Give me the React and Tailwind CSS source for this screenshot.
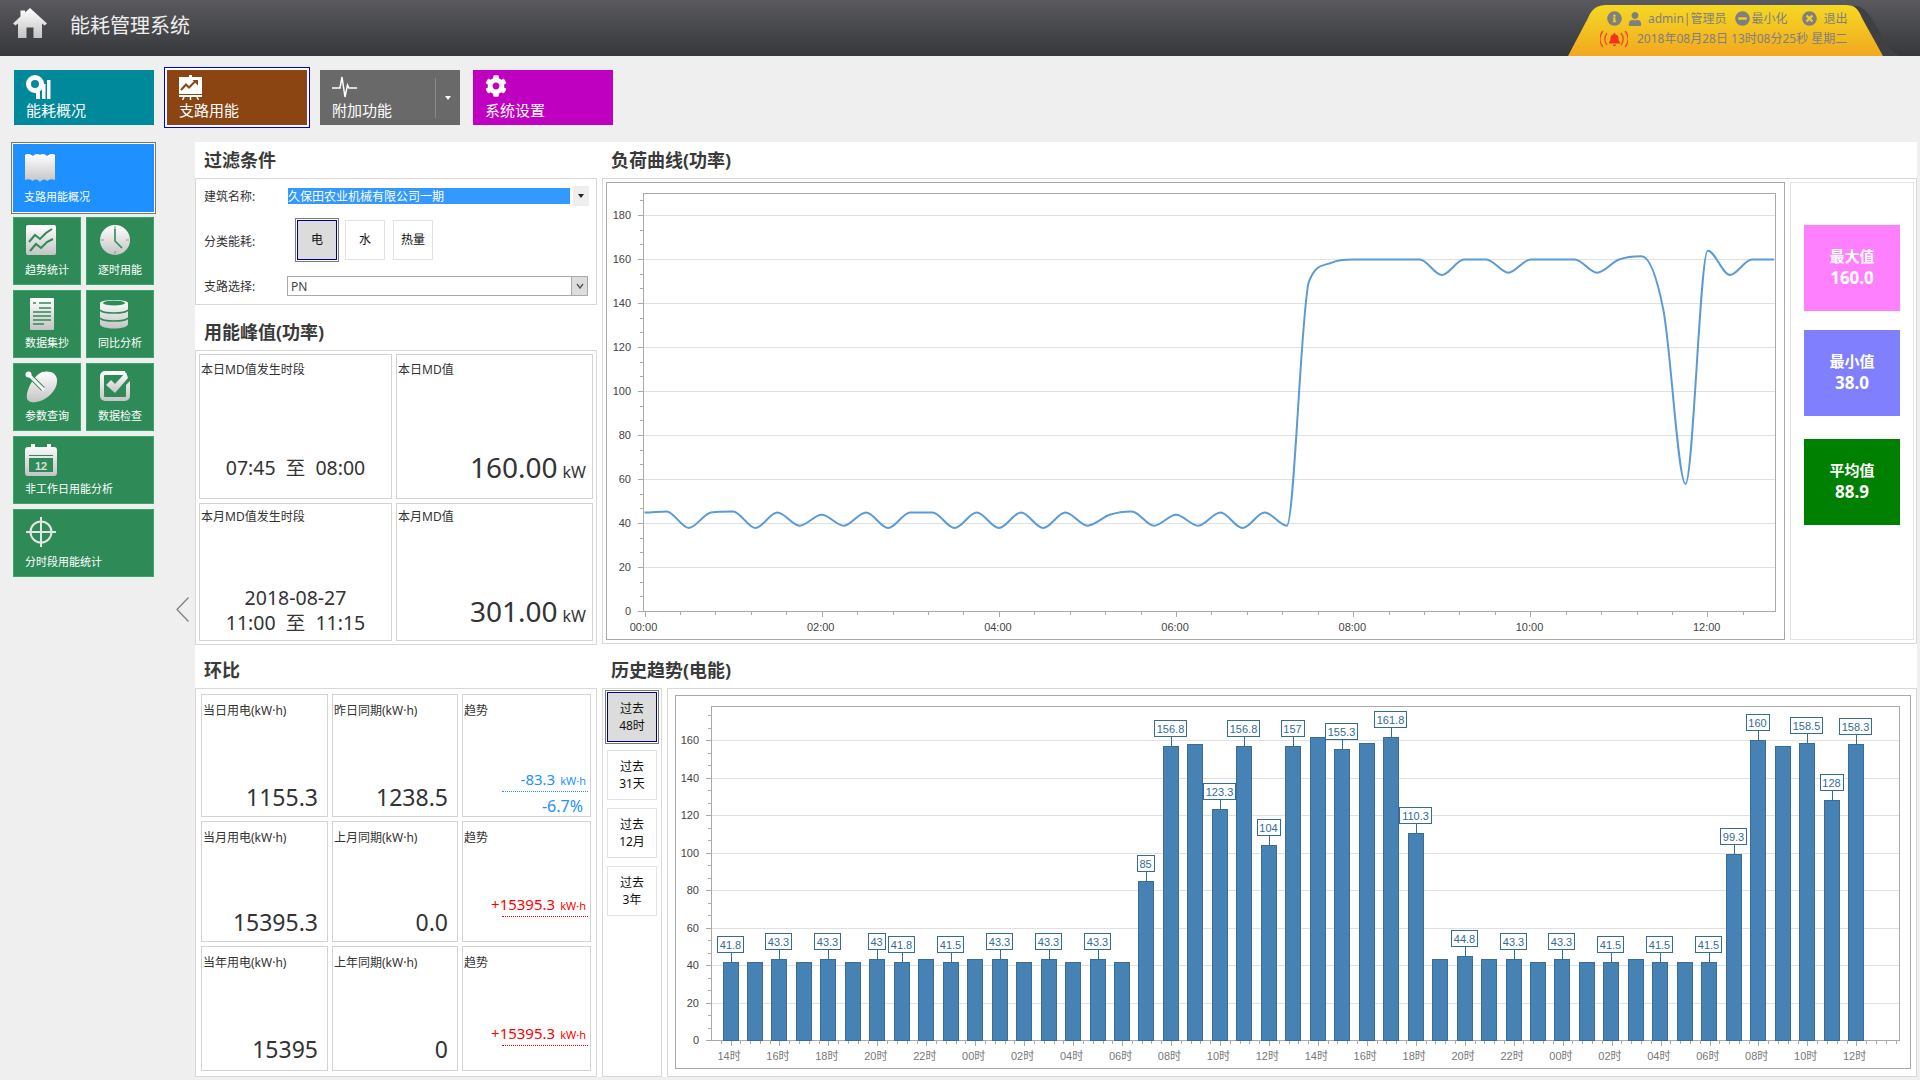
import {FaBell, FaCog, FaInfoCircle, FaMinusCircle, FaTimesCircle, FaUser} from "react-icons/fa";

const loadCurve = [
  45, 45.5, 38, 45, 45.5, 38, 45, 39, 44, 39, 45, 38, 45, 45, 38, 45, 38, 45, 38, 45, 39, 44, 45.5, 39, 44, 39,
  45, 38, 45, 39, 150, 158.5, 160, 160, 160, 160, 153, 160, 160, 154, 160, 160, 160, 154, 160, 161.5, 137, 58,
  164, 153, 160, 160,
];

const bars = [
  [41.8, 1], [41.8], [43.3, 1], [41.8], [43.3, 1], [41.8], [43.3, "43"], [41.8, 1], [43.3], [41.5, 1], [43.3],
  [43.3, 1], [41.5], [43.3, 1], [41.5], [43.3, 1], [41.5], [85, 1], [156.8, 1], [158.3], [123.3, 1], [156.8, 1],
  [104, 1], [157, 1], [162], [155.3, 1], [158.5], [161.8, 1], [110.3, 1], [43.3], [44.8, 1], [43.3], [43.3, 1],
  [41.5], [43.3, 1], [41.5], [41.5, 1], [43.3], [41.5, 1], [41.5], [41.5, 1], [99.3, 1], [160, 1], [157],
  [158.5, 1], [128, 1], [158.3, 1],
];

const hourNames = ["14", "16", "18", "20", "22", "00", "02", "04", "06", "08", "10", "12", "14", "16", "18", "20", "22", "00", "02", "04", "06", "08", "10", "12"];

// smooth path through the quarter hour points, flat at the peaks so the big step doesn't overshoot
function curvePath(data) {
  const stepX = 22.15;
  const pts = data.map((v, i) => [644.5 + i * stepX, 611.5 - v * 2.2]);
  const slopes = pts.map((p, i) => {
    if (i === 0 || i === pts.length - 1) return 0;
    const d0 = p[1] - pts[i - 1][1];
    const d1 = pts[i + 1][1] - p[1];
    if (d0 * d1 <= 0) return 0;
    const m = (d0 + d1) / 2;
    const limit = 3 * Math.min(Math.abs(d0), Math.abs(d1));
    return Math.sign(m) * Math.min(Math.abs(m), limit);
  });
  let d = `M${pts[0][0]} ${pts[0][1]}`;
  for (let i = 0; i < pts.length - 1; i++) {
    const p1 = pts[i];
    const p2 = pts[i + 1];
    d += `C${p1[0] + stepX / 3} ${p1[1] + slopes[i] / 3} ${p2[0] - stepX / 3} ${p2[1] - slopes[i + 1] / 3} ${p2[0]} ${p2[1]}`;
  }
  return d;
}

function LoadChart() {
  const ticks = [];
  for (let v = 0; v <= 190; v += 20 / 3) ticks.push(v);
  const xTicks = [];
  for (let k = 0; 644.5 + k * 35.43 < 1775; k++) xTicks.push(k);
  return (
    <svg viewBox="607 183 1177 456" className="w-[1177px] h-[456px] block" style={{fontFamily: "'Liberation Sans', sans-serif"}}>
      {[20, 40, 60, 80, 100, 120, 140, 160, 180].map((v) => (
        <line key={v} x1="643" x2="1775" y1={611.5 - v * 2.2} y2={611.5 - v * 2.2} stroke="#e0e0e0" />
      ))}
      <rect x="643.5" y="193.5" width="1132" height="418" fill="none" stroke="#aaaaaa" />
      {ticks.map((v, i) => (
        <line key={i} x1={i % 3 === 0 ? 638 : 640} x2="643" y1={Math.round(611 - v * 2.2) + 0.5} y2={Math.round(611 - v * 2.2) + 0.5} stroke="#aaaaaa" />
      ))}
      {xTicks.map((k) => (
        <line key={k} x1={Math.round(644.5 + k * 35.43) + 0.5} x2={Math.round(644.5 + k * 35.43) + 0.5} y1="611" y2={k % 5 === 0 ? 617 : 615} stroke="#aaaaaa" />
      ))}
      {[0, 20, 40, 60, 80, 100, 120, 140, 160, 180].map((v) => (
        <text key={v} x="631" y={614.5 - v * 2.2} textAnchor="end" fontSize="11" fill="#444444">{v}</text>
      ))}
      {["00:00", "02:00", "04:00", "06:00", "08:00", "10:00", "12:00"].map((t, i) => (
        <text key={t} x={643.5 + i * 177.2} y="631" textAnchor="middle" fontSize="11" fill="#444444">{t}</text>
      ))}
      <path d={curvePath(loadCurve)} fill="none" stroke="#5b9bd5" strokeWidth="2" />
    </svg>
  );
}

function HistoryChart() {
  const ticks = [];
  for (let v = 0; v <= 178; v += 20 / 3) ticks.push(v);
  const xTicks = [];
  for (let k = -1; 730.5 + k * 9.79 < 1899; k++) xTicks.push(k);
  const barW = 15;
  return (
    <svg viewBox="676 696 1234 372" className="w-[1234px] h-[372px] block" style={{fontFamily: "'Liberation Sans', 'Noto Sans CJK SC', sans-serif"}}>
      {[20, 40, 60, 80, 100, 120, 140, 160].map((v) => (
        <line key={v} x1="711" x2="1899" y1={Math.round(1040 - v * 1.873) + 0.5} y2={Math.round(1040 - v * 1.873) + 0.5} stroke="#e0e0e0" />
      ))}
      <rect x="711.5" y="706.5" width="1188" height="334" fill="none" stroke="#aaaaaa" />
      {ticks.map((v, i) => (
        <line key={i} x1={i % 3 === 0 ? 706 : 708} x2="711" y1={Math.round(1040 - v * 1.873) + 0.5} y2={Math.round(1040 - v * 1.873) + 0.5} stroke="#aaaaaa" />
      ))}
      {xTicks.map((k) => (
        <line key={k} x1={Math.round(730.5 + k * 9.79) + 0.5} x2={Math.round(730.5 + k * 9.79) + 0.5} y1="1040" y2={(k + 5) % 5 === 0 ? 1046 : 1044} stroke="#aaaaaa" />
      ))}
      {[0, 20, 40, 60, 80, 100, 120, 140, 160].map((v) => (
        <text key={v} x="699" y={1044 - v * 1.873} textAnchor="end" fontSize="11" fill="#444444">{v}</text>
      ))}
      {hourNames.map((h, i) => (
        <text key={i} x={729 + i * 48.94} y="1060" textAnchor="middle" fontSize="11" fill="#777777">{h}时</text>
      ))}
      {bars.map(([v], i) => {
        const cx = Math.round(730.5 + i * 24.47);
        const top = Math.round(1040 - v * 1.873);
        return (
          <rect key={i} x={cx - barW / 2} y={top + 0.5} width={barW} height={1040 - top} fill="#4682b4" stroke="#3a6c98" />
        );
      })}
      {bars.map(([v, label], i) => {
        if (!label) return null;
        const cx = Math.round(730.5 + i * 24.47);
        const top = Math.round(1040 - v * 1.873);
        const text = label === 1 ? String(v) : label;
        const digits = text.replace(".", "").length;
        const w = digits * 6 + (text.includes(".") ? 3 : 0) + 5;
        return (
          <g key={i}>
            <line x1={cx + 0.5} x2={cx + 0.5} y1={top - 9} y2={top} stroke="#336b9b" />
            <rect x={Math.round(cx - w / 2) - 0.5} y={top - 25.5} width={w} height="16" fill="#ffffff" stroke="#336b9b" />
            <text x={cx - 0.5} y={top - 13} textAnchor="middle" fontSize="11" fill="#336b9b">{text}</text>
          </g>
        );
      })}
    </svg>
  );
}

function IconDefs() {
  return (
    <svg className="absolute w-0 h-0">
      <defs>
        <linearGradient id="ig" x1="0" y1="0" x2="0" y2="1">
          <stop offset="0%" stopColor="#ffffff" />
          <stop offset="100%" stopColor="#c4c4c4" />
        </linearGradient>
      </defs>
    </svg>
  );
}

function HomeIcon() {
  return (
    <svg width="34" height="30" viewBox="0 0 34 30" className="shrink-0 -mt-[10px]">
      <path d="M17 0L34 15.5 31.5 17.5 29 15.5V30H20.5V19.5H13.5V30H5V15.5L2.5 17.5 0 15.5 7.5 8.5V2.5H12V4.5Z" fill="url(#ig)" />
    </svg>
  );
}

function DonutBars() {
  return (
    <svg width="25" height="24" viewBox="0 0 25 24">
      <path fillRule="evenodd" d="M9 0a9 9 0 1 0 .01 18A9 9 0 0 0 9 0Zm0 5a4 4 0 1 1-.01 8A4 4 0 0 1 9 5Z" fill="#ffffff" />
      <rect x="10" y="13" width="4" height="11" fill="#ffffff" />
      <rect x="16" y="9" width="3.5" height="15" fill="#ffffff" />
      <rect x="21" y="5" width="3.5" height="19" fill="#ffffff" />
    </svg>
  );
}

function BoardIcon() {
  return (
    <svg width="23" height="25" viewBox="0 0 23 25">
      <rect x="10" y="0" width="3" height="3" fill="#ffffff" />
      <rect x="0" y="2" width="23" height="17" fill="#ffffff" />
      <path d="M2 15L7 9.5 10 12.5 16 6.5" fill="none" stroke="#8b4513" strokeWidth="2" />
      <path d="M13.5 5H19V10.5Z" fill="#8b4513" />
      <rect x="0" y="20" width="23" height="2" fill="#ffffff" />
      <path d="M5 22L3.5 25M18 22L19.5 25M11.5 22V25" stroke="#ffffff" strokeWidth="1.5" />
    </svg>
  );
}

function PulseIcon() {
  return (
    <svg width="25" height="24" viewBox="0 0 25 24">
      <path d="M0 13H8L10 2 13 22 15.5 10 17 13H25" fill="none" stroke="#ffffff" strokeWidth="1.5" />
    </svg>
  );
}

function BookIcon() {
  return (
    <svg width="30" height="28" viewBox="0 0 30 28" className="ml-[1px]">
      <path d="M0 1C3-1 5 0 8 2 10 0 12-1 15 1 18-1 20 0 22 2 25 0 27-1 30 1V26C27 25 25 25 22 27 20 25 18 25 15 28 12 25 10 25 8 27 5 25 3 25 0 26Z" fill="url(#ig)" />
    </svg>
  );
}

function TrendIcon() {
  return (
    <svg width="30" height="30" viewBox="0 0 30 30" className="ml-[1px]">
      <rect width="30" height="30" rx="2" fill="url(#ig)" />
      <path d="M3 17L9 10 14 14 20 8 26 4M4 26L10 19 15 23 21 17 27 14" fill="none" stroke="#2e8b57" strokeWidth="2" />
    </svg>
  );
}

function ClockIcon() {
  return (
    <svg width="30" height="30" viewBox="0 0 30 30" className="ml-[2px]">
      <circle cx="15" cy="15" r="15" fill="url(#ig)" />
      <path d="M15 1V4M15 26V29M1 15H4M26 15H29" stroke="#9a9a9a" strokeWidth="1.2" />
      <path d="M15 4V16L22 23" fill="none" stroke="#2e8b57" strokeWidth="1.6" />
    </svg>
  );
}

function DocIcon() {
  return (
    <svg width="24" height="32" viewBox="0 0 24 32" className="ml-[5px]">
      <rect width="24" height="32" rx="1" fill="url(#ig)" />
      <path d="M3 5H6M9 5H21M9 10H21M3 14H21M3 18H21M3 22H21M3 26H14" stroke="#2e8b57" strokeWidth="1.6" />
    </svg>
  );
}

function DbIcon() {
  return (
    <svg width="28" height="31" viewBox="0 0 28 31" className="ml-[2px]">
      <path d="M0 5C0 1 28 1 28 5V26C28 32 0 32 0 26Z" fill="url(#ig)" />
      <ellipse cx="14" cy="5" rx="11" ry="2.5" fill="#2e8b57" />
      <path d="M0 12C3 16 25 16 28 12M0 20C3 24 25 24 28 20" fill="none" stroke="#2e8b57" strokeWidth="1.6" />
    </svg>
  );
}

function DishIcon() {
  return (
    <svg width="33" height="32" viewBox="0 0 33 32">
      <path d="M17 1C26-1 33 3 32 11 31 23 16 33 6 31 1 30 1 24 3 19 5 13 10 4 17 1Z" fill="url(#ig)" />
      <path d="M3 3L18 18" stroke="#2e8b57" strokeWidth="5" />
      <path d="M3 3L18 18" stroke="#ffffff" strokeWidth="3" strokeLinecap="round" />
      <circle cx="3.5" cy="3.5" r="3" fill="#ffffff" />
    </svg>
  );
}

function CheckIcon() {
  return (
    <svg width="30" height="30" viewBox="0 0 30 30" className="ml-[2px]">
      <path d="M5 0H25V4H5A1 1 0 0 0 4 5V25A1 1 0 0 0 5 26H25A1 1 0 0 0 26 25V14L30 10V25A5 5 0 0 1 25 30H5A5 5 0 0 1 0 25V5A5 5 0 0 1 5 0Z" fill="url(#ig)" />
      <path d="M6 14L11 9 15 13 26 1 28 7 15 22Z" fill="url(#ig)" />
    </svg>
  );
}

function CalendarIcon() {
  return (
    <svg width="32" height="32" viewBox="0 0 32 32">
      <path d="M3 3H6V0H10V3H22V0H26V3H29A3 3 0 0 1 32 6V29A3 3 0 0 1 29 32H3A3 3 0 0 1 0 29V6A3 3 0 0 1 3 3Z" fill="url(#ig)" />
      <rect x="4" y="11" width="24" height="1" fill="#2e8b57" />
      <rect x="4" y="14" width="24" height="14" fill="#2e8b57" />
      <text x="16" y="26" textAnchor="middle" fontSize="11" fontWeight="700" fill="#dddddd" style={{fontFamily: "'Liberation Sans', sans-serif"}}>12</text>
    </svg>
  );
}

function CrosshairIcon() {
  return (
    <svg width="30" height="30" viewBox="0 0 30 30" className="ml-[1px]">
      <circle cx="15" cy="15" r="10.5" fill="none" stroke="#e4e4e4" strokeWidth="2" />
      <path d="M15 0V30M0 15H30" stroke="#e4e4e4" strokeWidth="2" />
    </svg>
  );
}

function BellArcs() {
  return (
    <div className="relative w-[28px] h-[18px] flex items-center justify-center shrink-0">
      <svg width="28" height="18" viewBox="0 0 28 18" className="absolute inset-0">
        <path d="M3 1C-1 6-1 12 3 17M7 3C4 7 4 11 7 15M25 1C29 6 29 12 25 17M21 3C24 7 24 11 21 15" fill="none" stroke="#f04a2a" strokeWidth="1.3" />
      </svg>
      <FaBell className="text-[#f5321e] text-[13px] relative" />
    </div>
  );
}

function NavTile({icon, label, color, extra}) {
  return (
    <div className={`relative w-[140px] h-[55px] text-white pl-3 flex flex-col ${color} ${extra || ""}`}>
      <div className="h-[27px] pt-[5px] flex items-start">{icon}</div>
      <div className="text-[15px] leading-[26px]">{label}</div>
    </div>
  );
}

function SideTile({icon, label, wide}) {
  return (
    <div className={`h-[68px] bg-[#2e8b57] border border-[#37a868] text-white pl-[11px] flex flex-col ${wide ? "col-span-2" : ""}`}>
      <div className="h-[45px] pt-[7px] flex items-start">{icon}</div>
      <div className="text-[11px] leading-[14px] whitespace-nowrap">{label}</div>
    </div>
  );
}

function Title({children, className}) {
  return <div className={`text-[18px] font-bold text-[#3a3a3a] pl-[9px] ${className}`}>{children}</div>;
}

function PeakCard({label, children, top}) {
  return (
    <div className="border border-[#d3d3d3] flex flex-col text-[#333333] min-w-0">
      <div className={`text-[12px] leading-[16px] pl-[1px] whitespace-nowrap ${top}`}>{label}</div>
      <div className="mt-auto">{children}</div>
    </div>
  );
}

function KwValue({value, pb}) {
  return (
    <div className={`flex items-baseline justify-end pr-[6px] ${pb}`}>
      <span className="text-[28px] leading-[36px]">{value}</span>
      <span className="text-[16px] ml-[5px]">kW</span>
    </div>
  );
}

function StatCard({label, value, pb}) {
  return (
    <div className="border border-[#d3d3d3] flex flex-col text-[#333333] min-w-0">
      <div className="text-[12px] leading-[16px] pl-[1px] pt-[8px] whitespace-nowrap">{label}</div>
      <div className={`mt-auto text-right pr-[9px] text-[23px] leading-[30px] ${pb}`}>{value}</div>
    </div>
  );
}

function TrendCard({value, pct, textColor, lineColor}) {
  return (
    <div className="border border-[#d3d3d3] flex flex-col text-[#333333] min-w-0">
      <div className="text-[12px] leading-[16px] pl-[1px] pt-[8px] whitespace-nowrap">趋势</div>
      <div className={`mt-auto ml-auto mr-[2px] w-[86px] ${pct ? "" : "pb-[24px]"} ${textColor}`}>
        <div className="flex items-baseline justify-end whitespace-nowrap h-[20px] pr-[2px] leading-[20px]">
          <span className="text-[15px]">{value}</span>
          <span className="text-[11px] ml-[5px]">kW·h</span>
        </div>
        <div className={`mt-[2px] border-t border-dotted ${lineColor}`} />
        {pct && <div className="text-[16px] leading-[20px] mt-[4px] text-right pr-[5px]">{pct}</div>}
      </div>
    </div>
  );
}

function StatBox({label, value, color, className}) {
  return (
    <div className={`w-[96px] h-[86px] ${color} text-white font-bold flex flex-col items-center justify-center pb-[2px] ${className}`}>
      <div className="text-[15px] leading-[21px]">{label}</div>
      <div className="text-[17px] leading-[21px]">{value}</div>
    </div>
  );
}

function RangeBtn({top, bottom}) {
  return (
    <div className="w-[50px] h-[50px] border border-[#e3e3e3] text-[12px] leading-[17px] text-[#111111] flex flex-col items-center justify-center pb-[1px]">
      <div>{top}</div>
      <div>{bottom}</div>
    </div>
  );
}

export default function App() {
  return (
    <div className="w-[1920px] h-[1080px] overflow-hidden bg-[#efefef] flex flex-col" style={{fontFamily: "'Noto Sans', 'Noto Sans CJK SC', sans-serif"}}>
      <IconDefs />
      <div className="h-14 shrink-0 bg-gradient-to-b from-[#5a5a5e] to-[#37383b] flex items-center pl-[13px]">
        <HomeIcon />
        <div className="text-[20px] text-[#eeeeee] ml-[23px] -mt-[5px]">能耗管理系统</div>
        <div className="relative ml-auto mr-[37px] w-[315px] h-full text-[12px] text-[#7f7f7f]">
          <svg width="349" height="56" viewBox="0 0 349 56" className="absolute left-0 top-0">
            <defs>
              <linearGradient id="tab" x1="0" y1="0" x2="0" y2="1">
                <stop offset="0%" stopColor="#f5d823" />
                <stop offset="100%" stopColor="#f1a81f" />
              </linearGradient>
            </defs>
            <path d="M0 56C14 40 18 12 32 6H290C308 12 312 46 332 56Z" fill="#3f4043" />
            <path d="M0 56L20 18C24 8 30 5 38 5H278C286 5 290 8 294 18L315 56Z" fill="url(#tab)" />
          </svg>
          <div className="relative flex items-center h-[15px] mt-[11px] pl-[39px] leading-[15px] whitespace-nowrap">
            <FaInfoCircle className="text-[15px]" />
            <FaUser className="text-[14px] ml-[6px]" />
            <span className="ml-[6px]">admin|管理员</span>
            <FaMinusCircle className="text-[15px] ml-[9px]" />
            <span className="ml-[1px]">最小化</span>
            <FaTimesCircle className="text-[15px] ml-[15px]" />
            <span className="ml-[6px]">退出</span>
          </div>
          <div className="relative flex items-center mt-[4px] pl-[32px] leading-[18px] whitespace-nowrap">
            <BellArcs />
            <span className="ml-[9px]">2018年08月28日 13时08分25秒 星期二</span>
          </div>
        </div>
      </div>

      <div className="flex pl-[14px] gap-[13px] mt-[14px] shrink-0">
        <NavTile color="bg-[#00899b]" icon={<DonutBars />} label="能耗概况" />
        <NavTile color="bg-[#8b4513]" extra="shadow-[0_0_0_2px_#ffffff,0_0_0_3px_#0000dd]" icon={<BoardIcon />} label="支路用能" />
        <NavTile
          color="bg-[#696969]"
          icon={<PulseIcon />}
          label={
            <div className="flex">
              <span>附加功能</span>
              <div className="absolute right-[24px] top-[8px] h-[40px] border-l border-[#8a8a8a]" />
              <div className="absolute right-[9px] top-[26px] w-0 h-0 border-x-[3px] border-x-transparent border-t-[4px] border-t-white" />
            </div>
          }
        />
        <NavTile color="bg-[#c000c0]" icon={<FaCog className="text-[22px] text-white" />} label="系统设置" />
      </div>

      <div className="flex mt-[17px] flex-1 min-h-0">
        <div className="w-[195px] shrink-0 pl-[13px] pt-[2px]">
          <div className="grid grid-cols-[68px_68px] gap-[5px]">
            <div className="col-span-2 h-[68px] bg-[#1e90ff] shadow-[0_0_0_1px_#ffffff,0_0_0_2px_#777777] text-white pl-[11px] flex flex-col">
              <div className="h-[46px] pt-[10px]"><BookIcon /></div>
              <div className="text-[11px] leading-[14px]">支路用能概况</div>
            </div>
            <SideTile icon={<TrendIcon />} label="趋势统计" />
            <SideTile icon={<ClockIcon />} label="逐时用能" />
            <SideTile icon={<DocIcon />} label="数据集抄" />
            <SideTile icon={<DbIcon />} label="同比分析" />
            <SideTile icon={<DishIcon />} label="参数查询" />
            <SideTile icon={<CheckIcon />} label="数据检查" />
            <SideTile wide icon={<CalendarIcon />} label="非工作日用能分析" />
            <SideTile wide icon={<CrosshairIcon />} label="分时段用能统计" />
          </div>
          <svg width="13" height="25" viewBox="0 0 13 25" className="mt-[20px] ml-[163px]">
            <path d="M12.5 0.5L1 12.5 12.5 24.5" fill="none" stroke="#808080" strokeWidth="1.3" />
          </svg>
        </div>

        <div className="w-[1722px] h-[935px] bg-white flex gap-[5px] shrink-0">
          <div className="w-[402px] shrink-0 flex flex-col">
            <Title className="h-[36px] leading-[36px]">过滤条件</Title>
            <div className="h-[127px] border border-[#d8d8d8] pt-[7px] pl-[8px] text-[12px] text-[#333333]">
              <div className="flex items-center h-[20px]">
                <div className="w-[84px] pt-[2px]">建筑名称:</div>
                <div className="w-[282px] h-[16px] bg-[#3399ff] text-white leading-[18px]">久保田农业机械有限公司一期</div>
                <div className="w-[16px] h-[20px] ml-[3px] bg-[#eeeeee] flex items-center justify-center">
                  <div className="w-0 h-0 border-x-[3px] border-x-transparent border-t-[4px] border-t-[#222222]" />
                </div>
              </div>
              <div className="flex items-center h-[44px] mt-[12px]">
                <div className="w-[91px] pt-[3px]">分类能耗:</div>
                <div className="w-[44px] h-[44px] border border-[#777777] p-[1px]">
                  <div className="w-full h-full border border-[#000080] bg-[#dcdcdc] flex items-center justify-center text-[#111111]">电</div>
                </div>
                <div className="w-[40px] h-[40px] ml-[6px] border border-[#e3e3e3] flex items-center justify-center text-[#111111]">水</div>
                <div className="w-[40px] h-[40px] ml-[8px] border border-[#e3e3e3] flex items-center justify-center text-[#111111]">热量</div>
              </div>
              <div className="flex items-center h-[20px] mt-[14px]">
                <div className="w-[83px] pt-[2px]">支路选择:</div>
                <div className="w-[301px] h-[20px] border border-[#aaaaaa] flex items-center pl-[3px] text-[#444444]">
                  <span className="pt-[1px]">PN</span>
                  <div className="ml-auto w-[16px] h-full bg-[#dddddd] border-l border-[#aaaaaa] flex items-center justify-center">
                    <svg width="8" height="6" viewBox="0 0 8 6">
                      <path d="M1 1L4 5 7 1" fill="none" stroke="#555555" strokeWidth="1.4" />
                    </svg>
                  </div>
                </div>
              </div>
            </div>

            <Title className="h-[45px] leading-[54px]">用能峰值(功率)</Title>
            <div className="h-[295px] border border-[#d8d8d8] pt-[3px] pl-[3px] grid grid-cols-[193px_197px] grid-rows-[145px_138px] gap-[4px]">
              <PeakCard label="本日MD值发生时段" top="pt-[7px]">
                <div className="text-[19.5px] leading-[26px] text-center pb-[17px] whitespace-pre">07:45  至  08:00</div>
              </PeakCard>
              <PeakCard label="本日MD值" top="pt-[7px]">
                <KwValue value="160.00" pb="pb-[13px]" />
              </PeakCard>
              <PeakCard label="本月MD值发生时段" top="pt-[5px]">
                <div className="text-[19.5px] leading-[25px] text-center pb-[5px] whitespace-pre">
                  <div>2018-08-27</div>
                  <div>11:00  至  11:15</div>
                </div>
              </PeakCard>
              <PeakCard label="本月MD值" top="pt-[5px]">
                <KwValue value="301.00" pb="pb-[11px]" />
              </PeakCard>
            </div>

            <Title className="h-[43px] leading-[50px]">环比</Title>
            <div className="h-[389px] border border-[#d8d8d8] pt-[5px] pl-[5px] grid grid-cols-[127px_126px_129px] grid-rows-[123px_121px_125px] gap-[4px]">
              <StatCard label="当日用电(kW·h)" value="1155.3" pb="pb-[4px]" />
              <StatCard label="昨日同期(kW·h)" value="1238.5" pb="pb-[4px]" />
              <TrendCard value="-83.3" pct="-6.7%" textColor="text-[#1e90ff]" lineColor="border-[#1e90ff]" />
              <StatCard label="当月用电(kW·h)" value="15395.3" pb="pb-[4px]" />
              <StatCard label="上月同期(kW·h)" value="0.0" pb="pb-[4px]" />
              <TrendCard value="+15395.3" textColor="text-[#ff0000]" lineColor="border-[#ff0000]" />
              <StatCard label="当年用电(kW·h)" value="15395" pb="pb-[6px]" />
              <StatCard label="上年同期(kW·h)" value="0" pb="pb-[6px]" />
              <TrendCard value="+15395.3" textColor="text-[#ff0000]" lineColor="border-[#ff0000]" />
            </div>
          </div>

          <div className="w-[1315px] shrink-0 flex flex-col">
            <Title className="h-[36px] leading-[36px]">负荷曲线(功率)</Title>
            <div className="h-[466px] border border-[#d8d8d8] pt-[3px] pl-[3px] flex">
              <div className="w-[1179px] h-[458px] border border-[#aaaaaa]">
                <LoadChart />
              </div>
              <div className="w-[124px] h-[458px] ml-[5px] border border-[#e3e3e3] pl-[13px] pt-[42px]">
                <StatBox label="最大值" value="160.0" color="bg-[#ff80ff]" />
                <StatBox label="最小值" value="38.0" color="bg-[#8080ff]" className="mt-[19px]" />
                <StatBox label="平均值" value="88.9" color="bg-[#008000]" className="mt-[23px]" />
              </div>
            </div>

            <Title className="h-[44px] leading-[52px]">历史趋势(电能)</Title>
            <div className="flex gap-[5px] h-[389px]">
              <div className="w-[60px] border border-[#d8d8d8] flex flex-col items-center pt-[1px]">
                <div className="w-[54px] h-[54px] border border-[#777777] p-[1px] mb-[6px]">
                  <div className="w-full h-full border border-[#000080] bg-[#dcdcdc] text-[12px] leading-[17px] text-[#111111] flex flex-col items-center justify-center">
                    <div>过去</div>
                    <div>48时</div>
                  </div>
                </div>
                <div className="flex flex-col gap-[8px]">
                  <RangeBtn top="过去" bottom="31天" />
                  <RangeBtn top="过去" bottom="12月" />
                  <RangeBtn top="过去" bottom="3年" />
                </div>
              </div>
              <div className="w-[1250px] border border-[#d8d8d8] pt-[6px] pl-[7px]">
                <div className="w-[1236px] h-[374px] border border-[#aaaaaa]">
                  <HistoryChart />
                </div>
              </div>
            </div>
          </div>
        </div>
      </div>
    </div>
  );
}
